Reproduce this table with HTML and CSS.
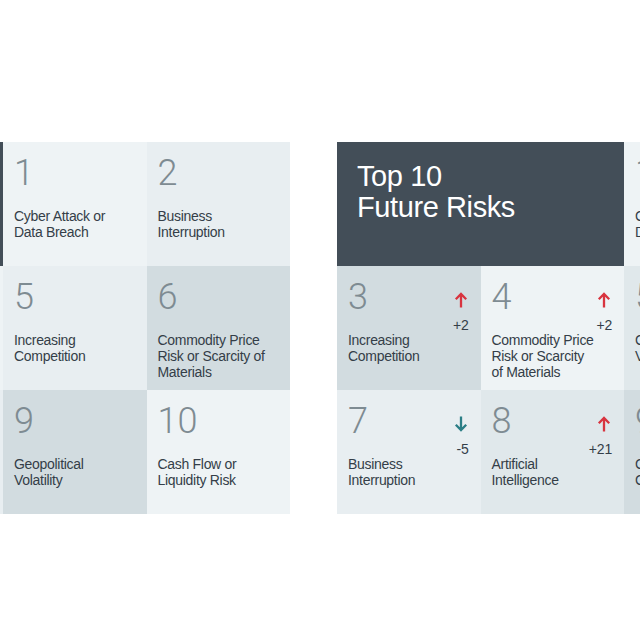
FILE: index.html
```html
<!DOCTYPE html>
<html lang="en">
<head>
<meta charset="utf-8">
<title>Top 10 Risks</title>
<link rel="stylesheet" href="styles.css">
</head>
<body>
<div class="viewport">
  <div class="track">
    <section class="panel">
      <div class="title"></div>
      <div class="cell c-light"><div class="top"><span class="num">1</span></div><p class="label">Cyber Attack or<br>Data Breach</p></div>
      <div class="cell c-soft"><div class="top"><span class="num">2</span></div><p class="label">Business<br>Interruption</p></div>
      <div class="cell c-dark"></div>
      <div class="cell c-light"></div>
      <div class="cell c-soft"><div class="top"><span class="num">5</span></div><p class="label">Increasing<br>Competition</p></div>
      <div class="cell c-dark"><div class="top"><span class="num">6</span></div><p class="label">Commodity Price<br>Risk or Scarcity of<br>Materials</p></div>
      <div class="cell c-light"></div>
      <div class="cell c-soft"></div>
      <div class="cell c-dark"><div class="top"><span class="num">9</span></div><p class="label">Geopolitical<br>Volatility</p></div>
      <div class="cell c-light"><div class="top"><span class="num">10</span></div><p class="label">Cash Flow or<br>Liquidity Risk</p></div>
    </section>

    <section class="panel">
      <div class="title"><h2>Top 10<br>Future Risks</h2></div>
      <div class="cell c-light"><div class="top"><span class="num">1</span></div><p class="label">Cyber Attack or<br>Data Breach</p></div>
      <div class="cell c-soft"></div>
      <div class="cell c-dark">
        <div class="top"><span class="num">3</span>
          <div class="change"><svg class="arrow up" viewBox="0 0 14 16"><path d="M7 15.5V2M1.8 7.2L7 2l5.2 5.2"/></svg><span class="delta">+2</span></div>
        </div>
        <p class="label">Increasing<br>Competition</p>
      </div>
      <div class="cell c-light">
        <div class="top"><span class="num">4</span>
          <div class="change"><svg class="arrow up" viewBox="0 0 14 16"><path d="M7 15.5V2M1.8 7.2L7 2l5.2 5.2"/></svg><span class="delta">+2</span></div>
        </div>
        <p class="label">Commodity Price<br>Risk or Scarcity<br>of Materials</p>
      </div>
      <div class="cell c-mid"><div class="top"><span class="num">5</span></div><p class="label">Currency<br>Volatility</p></div>
      <div class="cell c-dark"></div>
      <div class="cell c-soft">
        <div class="top"><span class="num">7</span>
          <div class="change"><svg class="arrow down" viewBox="0 0 14 16"><path d="M7 0.5V14M1.8 8.8L7 14l5.2-5.2"/></svg><span class="delta">-5</span></div>
        </div>
        <p class="label">Business<br>Interruption</p>
      </div>
      <div class="cell c-mid">
        <div class="top"><span class="num">8</span>
          <div class="change"><svg class="arrow up" viewBox="0 0 14 16"><path d="M7 15.5V2M1.8 7.2L7 2l5.2 5.2"/></svg><span class="delta">+21</span></div>
        </div>
        <p class="label">Artificial<br>Intelligence</p>
      </div>
      <div class="cell c-dark"><div class="top"><span class="num">9</span></div><p class="label">Climate<br>Change</p></div>
      <div class="cell c-light"></div>
    </section>
  </div>
</div>
</body>
</html>
```

FILE: styles.css
```css
html, body {
  margin: 0;
  padding: 0;
  background: #ffffff;
}

body {
  width: 640px;
  height: 640px;
  overflow: hidden;
  font-family: "Liberation Sans", Arial, sans-serif;
}

.viewport {
  width: 640px;
  overflow: hidden;
  padding-top: 142px;
}

.track {
  display: flex;
  gap: 47px;
  margin-left: -284px;
  width: max-content;
}

.panel {
  display: grid;
  grid-template-columns: repeat(4, 143.5px);
  grid-template-rows: 124px 124px 124px;
}

.title {
  grid-column: span 2;
  background: #434e58;
  padding: 19px 20px 0 20px;
}

.title h2 {
  margin: 0;
  color: #ffffff;
  font-family: "Liberation Sans", Arial, sans-serif;
  font-weight: 400;
  font-size: 29px;
  line-height: 31px;
  letter-spacing: -0.4px;
}

.cell {
  display: flex;
  flex-direction: column;
  padding: 13px 12px 0 11px;
}

.c-light { background: #eef3f5; }
.c-soft  { background: #e8eef1; }
.c-mid   { background: #e0e8eb; }
.c-dark  { background: #d2dce0; }

.top {
  display: flex;
  justify-content: space-between;
  align-items: flex-start;
  height: 36px;
}

.num {
  font-family: Roboto, "Liberation Sans", sans-serif;
  font-weight: 300;
  font-size: 36px;
  line-height: 36px;
  color: #7e8b92;
}

.change {
  display: flex;
  flex-direction: column;
  align-items: flex-end;
  padding-top: 13px;
  gap: 10px;
}

.arrow {
  width: 14px;
  height: 16px;
  margin-right: 1px;
  fill: none;
  stroke-width: 2.3;
  stroke-linecap: butt;
}

.arrow.up { stroke: #d8343f; }
.arrow.down { stroke: #2b7e86; }

.delta {
  font-size: 14px;
  line-height: 14px;
  color: #343e48;
  letter-spacing: -0.2px;
}

.label {
  margin: 17px 0 0 0;
  font-size: 14px;
  line-height: 16px;
  color: #343e48;
  letter-spacing: -0.3px;
}
```
